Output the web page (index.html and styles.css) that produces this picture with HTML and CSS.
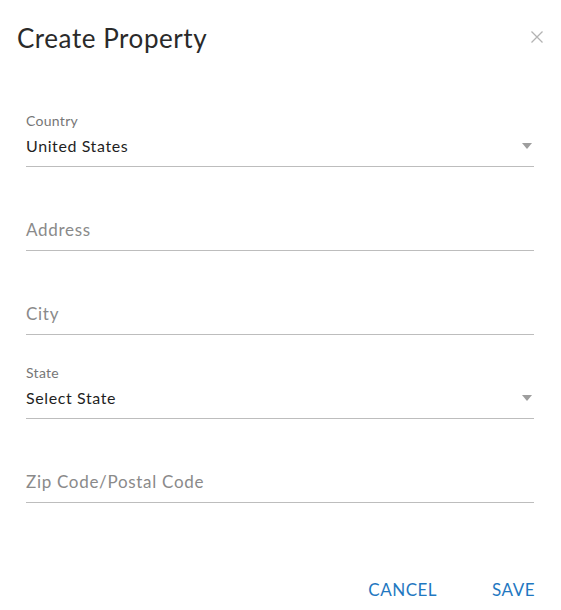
FILE: index.html
```html
<!DOCTYPE html>
<html>
<head>
<meta charset="utf-8">
<link rel="stylesheet" href="styles.css">
</head>
<body>
<div class="dialog">
  <div class="header">
    <h1 class="title">Create Property</h1>
    <button class="close" aria-label="Close">
      <svg width="12" height="12" viewBox="0 0 12 12"><path d="M0.5 0.5L11.5 11.5M11.5 0.5L0.5 11.5" stroke="#b3b3b3" stroke-width="1.3" fill="none"/></svg>
    </button>
  </div>
  <div class="fields">
    <div class="field">
      <div class="label">Country</div>
      <div class="value">United States<span class="caret"></span></div>
    </div>
    <div class="field">
      <div class="placeholder">Address</div>
    </div>
    <div class="field">
      <div class="placeholder">City</div>
    </div>
    <div class="field">
      <div class="label">State</div>
      <div class="value">Select State<span class="caret"></span></div>
    </div>
    <div class="field">
      <div class="placeholder">Zip Code/Postal Code</div>
    </div>
  </div>
  <div class="footer">
    <button class="action">CANCEL</button>
    <button class="action">SAVE</button>
  </div>
</div>
</body>
</html>
```
FILE: styles.css
```css
html, body {
  margin: 0;
  padding: 0;
  background: #fff;
}
body {
  font-family: Lato, "Open Sans", sans-serif;
  color: #222;
}
.dialog {
  width: 561px;
  height: 610px;
  display: flex;
  flex-direction: column;
}
.header {
  display: flex;
  justify-content: space-between;
  align-items: flex-start;
  padding: 22px 18px 0 17px;
}
.title {
  margin: 0;
  font-size: 26px;
  font-weight: 400;
  line-height: 32px;
  letter-spacing: 0.55px;
  color: #2a2a2a;
}
.close {
  border: 0;
  background: none;
  padding: 0;
  margin-top: 9px;
  width: 12px;
  height: 12px;
  display: flex;
}
.fields {
  padding: 0 27px 0 26px;
  margin-top: 29px;
  display: flex;
  flex-direction: column;
}
.field {
  height: 83px;
  border-bottom: 1px solid #bdbdbd;
  display: flex;
  flex-direction: column;
  justify-content: flex-end;
}
.label {
  font-size: 14px;
  line-height: 16px;
  letter-spacing: 0.3px;
  color: #767676;
  margin-bottom: 7px;
}
.value {
  font-size: 16px;
  line-height: 20px;
  letter-spacing: 0.6px;
  padding: 0 0 10px;
  color: #1f1f1f;
  display: flex;
  justify-content: space-between;
  align-items: center;
}
.caret {
  width: 0;
  height: 0;
  border-left: 5px solid transparent;
  border-right: 5px solid transparent;
  border-top: 6px solid #9e9e9e;
  margin-right: 2px;
}
.placeholder {
  font-size: 17px;
  line-height: 20px;
  letter-spacing: 0.7px;
  padding-bottom: 10px;
  color: #8a8a8a;
}
.footer {
  margin-top: auto;
  display: flex;
  justify-content: flex-end;
  gap: 55px;
  padding: 0 26px 10px 0;
}
.action {
  border: 0;
  background: none;
  padding: 0;
  font-family: Lato, "Open Sans", sans-serif;
  font-size: 17px;
  line-height: 20px;
  color: #1f78c1;
  letter-spacing: 0.5px;
}
```
